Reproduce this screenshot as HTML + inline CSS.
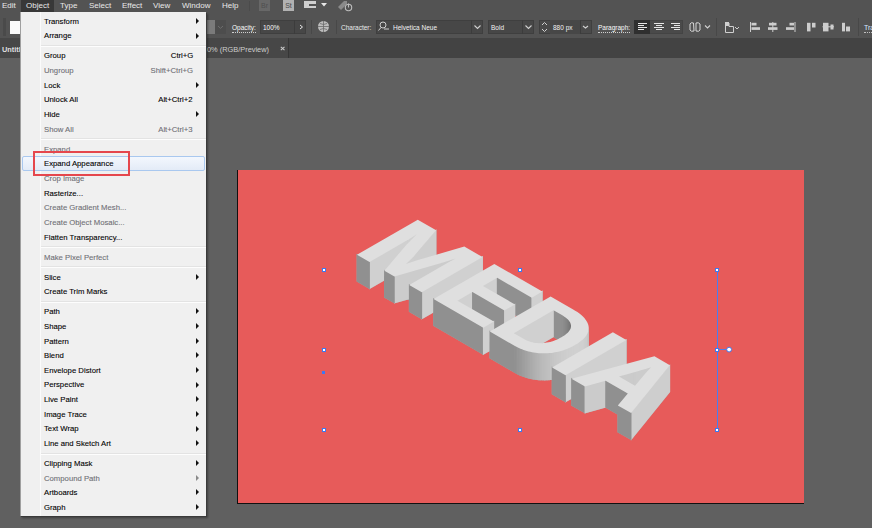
<!DOCTYPE html>
<html><head><meta charset="utf-8">
<style>
*{margin:0;padding:0;box-sizing:border-box}
html,body{width:872px;height:528px;overflow:hidden;background:#606060;font-family:"Liberation Sans",sans-serif;}
.abs{position:absolute}
#menubar{position:absolute;left:0;top:0;width:872px;height:12px;background:#535353;}
.mb{position:absolute;top:1px;font-size:8px;color:#e8e8e8;line-height:10px;white-space:nowrap}
#ctrl{position:absolute;left:0;top:12px;width:872px;height:26px;background:#535353;}
#tabs{position:absolute;left:0;top:38px;width:872px;height:20px;background:#434343;}
#canvas{position:absolute;left:0;top:58px;width:872px;height:470px;background:#606060;}
#menu{position:absolute;left:20px;top:12px;width:186px;height:504px;background:#f0f0f0;box-shadow:1px 1px 0 #3a3a3a, 2px 2px 2px rgba(0,0,0,0.35);border-left:1px solid #a0a0a0;}
.mi{position:absolute;left:23px;font-size:8px;line-height:10px;color:#000;transform:scaleX(0.965);transform-origin:0 50%;-webkit-text-stroke:0.1px currentColor;white-space:nowrap}
.mi.dis,.sc.dis{color:#6f6f75}
.sc{position:absolute;right:13px;font-size:8px;line-height:10px;color:#000;transform:scaleX(0.965);transform-origin:100% 50%;-webkit-text-stroke:0.1px currentColor;white-space:nowrap}
.ar{position:absolute;left:175px;width:0;height:0;border-top:3px solid transparent;border-bottom:3px solid transparent;border-left:3.4px solid #111}
.sep{position:absolute;left:20px;right:0;height:2px;background:#fdfdfd;border-top:1px solid #e3e3e3}
svg{position:absolute;left:0;top:0}
.cb{position:absolute;font-size:6.5px;line-height:9px;color:#fafafa;white-space:nowrap}
.tb{position:absolute;font-size:7.4px;line-height:9px;color:#cdcdcd;white-space:nowrap}
</style></head><body>
<div id="menubar">
<div class="mb" style="left:2px">Edit</div>
<div class="abs" style="left:21px;top:0;width:33px;height:12px;background:#383838"></div>
<div class="mb" style="left:26px">Object</div>
<div class="mb" style="left:60px">Type</div>
<div class="mb" style="left:89px">Select</div>
<div class="mb" style="left:122px">Effect</div>
<div class="mb" style="left:153px">View</div>
<div class="mb" style="left:182px">Window</div>
<div class="mb" style="left:222px">Help</div>
<div class="abs" style="left:249px;top:1px;width:1px;height:10px;background:#4b4b4b"></div>
<div class="abs" style="left:259px;top:0;width:11px;height:11px;background:#686868;color:#4f4f4f;font-size:7px;line-height:11px;text-align:center">Br</div>
<div class="abs" style="left:283px;top:0;width:11px;height:11px;background:#b2b2b2;color:#4a4a4a;font-size:7px;line-height:11px;text-align:center">St</div>
<div class="abs" style="left:304px;top:1px;width:12px;height:7px;background:#cfcfcf"></div>
<div class="abs" style="left:309px;top:3.5px;width:7px;height:2px;background:#535353"></div>
<svg class="abs" style="left:321px;top:3px" width="6" height="4"><path d="M0 0 H6 L3 3.5Z" fill="#e6e6e6"/></svg>
<svg class="abs" style="left:337px;top:0" width="16" height="12"><path d="M1 7 L7 1 L10 1 L10 4 L4 10 Z" fill="#8a8a8a"/><circle cx="11.5" cy="7.5" r="3.2" stroke="#bdbdbd" stroke-width="1.1" fill="#535353"/><path d="M11.5 3.5 V7.5" stroke="#bdbdbd" stroke-width="1.1"/></svg>
</div>
<div id="ctrl">
<div class="abs" style="left:3px;top:6px;width:3px;height:18px;background:#4a4a4a"></div>
<div class="abs" style="left:10px;top:9px;width:12px;height:13px;background:#fafafa"></div>
<div class="abs" style="left:205px;top:8px;width:10px;height:14px;background:#7b7b7b"></div>
<div class="abs" style="left:215px;top:8px;width:11px;height:14px;background:#4d4d4d"></div>
<svg class="abs" style="left:216px;top:11px" width="9" height="8"><path d="M2 3 L4.5 5.3 L7 3" stroke="#6e6e6e" stroke-width="1" fill="none"/></svg>
<div class="cb" style="left:232px;top:11px;border-bottom:1px dotted #cfcfcf">Opacity:</div>
<div class="abs" style="left:260px;top:8px;width:46px;height:14px;background:#474747;border:1px solid #3f3f3f"></div>
<div class="abs" style="left:294px;top:8px;width:1px;height:14px;background:#3c3c3c"></div>
<div class="cb" style="left:263px;top:11px">100%</div>
<svg class="abs" style="left:297px;top:11px" width="8" height="8"><path d="M3 2 L5.5 4 L3 6" stroke="#e8e8e8" stroke-width="1" fill="none"/></svg>
<div class="abs" style="left:311px;top:8px;width:1px;height:14px;background:#484848"></div>
<svg class="abs" style="left:317px;top:8px" width="13" height="13"><circle cx="6.5" cy="6.5" r="5.5" fill="#bdbdbd"/><path d="M1 6.5h11M6.5 1v11M3 3.5q3.5 2 7 0M3 9.5q3.5-2 7 0" stroke="#6a6a6a" stroke-width="0.8" fill="none"/></svg>
<div class="abs" style="left:336px;top:8px;width:1px;height:14px;background:#484848"></div>
<div class="cb" style="left:341px;top:11px;color:#eaeaea">Character:</div>
<div class="abs" style="left:376px;top:8px;width:107px;height:14px;background:#474747;border:1px solid #3f3f3f"></div>
<div class="abs" style="left:471px;top:8px;width:1px;height:14px;background:#3c3c3c"></div>
<svg class="abs" style="left:377px;top:9px" width="13" height="11"><circle cx="6" cy="4" r="3" stroke="#cfcfcf" stroke-width="1" fill="none"/><path d="M4 6.5 L1.5 9.5 M7 8h5" stroke="#cfcfcf" stroke-width="1"/></svg>
<div class="cb" style="left:393px;top:11px;color:#f2f2f2">Helvetica Neue</div>
<svg class="abs" style="left:473px;top:11px" width="9" height="8"><path d="M1.5 2.5 L4.5 5.5 L7.5 2.5" stroke="#d0d0d0" stroke-width="1.1" fill="none"/></svg>
<div class="abs" style="left:488px;top:8px;width:46px;height:14px;background:#474747;border:1px solid #3f3f3f"></div>
<div class="abs" style="left:522px;top:8px;width:1px;height:14px;background:#3c3c3c"></div>
<div class="cb" style="left:491px;top:11px;color:#f2f2f2">Bold</div>
<svg class="abs" style="left:524px;top:11px" width="9" height="8"><path d="M1.5 2.5 L4.5 5.5 L7.5 2.5" stroke="#d0d0d0" stroke-width="1.1" fill="none"/></svg>
<div class="abs" style="left:539px;top:8px;width:53px;height:14px;background:#4a4a4a;border:1px solid #3f3f3f"></div>
<div class="abs" style="left:550px;top:8px;width:30px;height:14px;background:#474747"></div>
<div class="abs" style="left:580px;top:8px;width:1px;height:14px;background:#3c3c3c"></div>
<svg class="abs" style="left:540px;top:8px" width="9" height="14"><path d="M2 5 L4.5 2.5 L7 5 M2 9 L4.5 11.5 L7 9" stroke="#d0d0d0" stroke-width="1" fill="none"/></svg>
<div class="cb" style="left:553px;top:11px;color:#f2f2f2">880 px</div>
<svg class="abs" style="left:581px;top:11px" width="9" height="8"><path d="M2 3 L4.5 5 L7 3" stroke="#d0d0d0" stroke-width="1.1" fill="none"/></svg>
<div class="cb" style="left:598px;top:11px;border-bottom:1px dotted #cfcfcf">Paragraph:</div>
<div class="abs" style="left:634px;top:8px;width:49px;height:14px;background:#4a4a4a;border:1px solid #444"></div>
<div class="abs" style="left:634px;top:8px;width:16px;height:14px;background:#2f2f2f"></div>
<svg class="abs" style="left:634px;top:8px" width="49" height="14" stroke="#e6e6e6" stroke-width="1">
<path d="M4 3.5h9M4 5.5h6M4 7.5h9M4 9.5h6"/>
<path d="M20 3.5h10M22 5.5h6M20 7.5h10M22 9.5h6"/>
<path d="M37 3.5h9M40 5.5h6M37 7.5h9M40 9.5h6"/>
</svg>
<svg class="abs" style="left:688px;top:9px" width="24" height="13"><path d="M2 3 Q3 1 5.5 2 L6 10 Q3 11 2 9 Z M8 2 Q10.5 1 12 3 L12 9 Q11 11 8 10 Z" stroke="#d8d8d8" stroke-width="1" fill="none"/><path d="M17 4.5 L19.5 7 L22 4.5" stroke="#d0d0d0" stroke-width="1.1" fill="none"/></svg>
<div class="abs" style="left:716px;top:6px;width:1px;height:18px;background:#484848"></div>
<svg class="abs" style="left:723px;top:9px" width="18" height="13"><path d="M2.5 2 V11.5 H10.5 V5.5 H6 V2" stroke="#cfcfcf" stroke-width="1" fill="none"/><rect x="2" y="1" width="4" height="4" fill="#cfcfcf"/><path d="M12 6 L14 8 L16 6" stroke="#cfcfcf" stroke-width="1" fill="none"/></svg>
<svg class="abs" style="left:745px;top:8px" width="112" height="14" fill="#cdcdcd">
<rect x="5" y="2" width="1" height="10"/><rect x="6.5" y="2.8" width="5" height="2.7"/><rect x="6.5" y="7.2" width="8.5" height="2.7"/>
<rect x="27.3" y="2" width="1" height="10"/><rect x="24" y="2.8" width="7.5" height="2.7"/><rect x="23" y="7.2" width="9.5" height="2.7"/>
<rect x="49.5" y="2" width="1" height="10"/><rect x="44.5" y="2.8" width="4.5" height="2.7"/><rect x="41" y="7.2" width="8" height="2.7"/>
<rect x="62" y="2.8" width="3.5" height="8.6"/><rect x="67" y="2.8" width="3.5" height="4.7"/>
<rect x="77.5" y="6.3" width="11.5" height="1"/><rect x="78" y="2.8" width="5.5" height="8.6"/><rect x="85.5" y="4.5" width="3" height="5"/>
<rect x="97" y="2.8" width="3" height="8.6"/><rect x="101" y="6.5" width="4" height="4.9"/>
</svg>
<div class="abs" style="left:858px;top:6px;width:1px;height:18px;background:#484848"></div>
<div class="cb" style="left:864px;top:11px;font-size:7px;color:#d6e6ff;border-bottom:1px dotted #c0c0c0">Transform</div>
</div>
<div id="tabs">
<div class="abs" style="left:0;top:0;width:288px;height:20px;background:#474747"></div>
<div class="abs" style="left:288px;top:0;width:1px;height:20px;background:#363636"></div>
<div class="tb" style="left:2px;top:7px;font-weight:bold;color:#dedede">Untitled-1* @ 50% (RGB/Preview)</div>
<div class="tb" style="left:207px;top:7px;background:#474747;padding-left:0">0% (RGB/Preview)</div>
<svg class="abs" style="left:280px;top:8px" width="6" height="5"><path d="M0.8 0.8 L4.5 4.2 M4.5 0.8 L0.8 4.2" stroke="#c8c8c8" stroke-width="1.1"/></svg>
</div>
<div id="canvas"></div>
<svg width="872" height="528" viewBox="0 0 872 528">
<rect x="238" y="170" width="566" height="333" fill="#e75b5a"/>
<rect x="237" y="170" width="1" height="334" fill="#111"/>
<rect x="237" y="503" width="567" height="1" fill="#111"/>
<path fill="#a8a8a8" d="M418.30,231.89 417.08,233.46 417.08,261.26 418.30,259.69ZM417.66,232.93 415.56,234.28 415.56,262.08 417.66,260.73ZM416.24,233.84 414.22,235.13 414.22,262.93 416.24,261.64ZM414.89,234.70 412.96,235.93 412.96,263.73 414.89,262.50ZM413.64,235.50 411.79,236.67 411.79,264.47 413.64,263.30ZM412.47,236.24 410.70,237.35 410.70,265.15 412.47,264.04ZM411.38,236.93 409.70,237.98 409.70,265.78 411.38,264.73ZM410.38,237.56 408.78,238.55 408.78,266.35 410.38,265.36ZM409.46,238.13 407.95,239.06 407.95,266.86 409.46,265.93ZM408.63,238.64 407.20,239.51 407.20,267.31 408.63,266.44ZM407.88,239.09 406.53,239.90 406.53,267.70 407.88,266.89ZM407.22,239.49 405.95,240.24 405.95,268.04 407.22,267.29ZM436.41,229.21 413.43,255.90 413.43,283.70 436.41,257.01ZM406.64,239.83 369.19,261.46 369.19,289.26 406.64,267.63ZM459.82,255.91 457.49,257.19 457.49,284.99 459.82,283.71ZM413.96,255.30 411.16,258.33 411.16,286.13 413.96,283.10ZM458.22,256.87 455.21,257.85 455.21,285.65 458.22,284.67ZM369.89,261.46 356.63,253.80 356.63,281.60 369.89,289.26ZM455.97,257.61 453.07,258.54 453.07,286.34 455.97,285.41ZM453.83,258.30 451.05,259.19 451.05,286.99 453.83,286.10ZM451.81,258.95 449.15,259.80 449.15,287.60 451.81,286.75ZM449.91,259.55 447.36,260.36 447.36,288.16 449.91,287.35ZM448.13,260.12 445.70,260.88 445.70,288.68 448.13,287.92ZM411.72,257.76 405.66,263.49 405.66,291.29 411.72,285.56ZM446.47,260.64 444.16,261.36 444.16,289.16 446.47,288.44ZM444.92,261.12 442.73,261.79 442.73,289.59 444.92,288.92ZM443.50,261.56 441.43,262.19 441.43,289.99 443.50,289.36ZM442.19,261.96 440.24,262.54 440.24,290.34 442.19,289.76ZM441.01,262.31 439.17,262.84 439.17,290.64 441.01,290.11ZM439.94,262.62 394.00,275.71 394.00,303.51 439.94,290.42ZM394.73,275.80 384.04,269.63 384.04,297.43 394.73,303.60ZM482.93,256.12 421.45,291.62 421.45,319.42 482.93,283.92ZM497.52,276.74 482.64,285.34 482.64,313.14 497.52,304.54ZM532.10,297.11 496.83,276.74 496.83,304.54 532.10,324.91ZM422.14,291.62 408.88,283.97 408.88,311.77 422.14,319.42ZM542.66,290.61 531.41,297.11 531.41,324.91 542.66,318.41ZM472.77,291.03 457.16,300.05 457.16,327.85 472.77,318.83ZM504.75,309.90 472.07,291.03 472.07,318.83 504.75,337.70ZM515.32,303.40 504.06,309.90 504.06,337.70 515.32,331.20ZM562.26,314.52 553.12,309.24 553.12,337.04 562.26,342.32ZM483.61,327.12 433.18,298.00 433.18,325.80 483.61,354.92ZM563.73,315.42 561.58,314.12 561.58,341.92 563.73,343.22ZM565.06,316.33 563.06,314.99 563.06,342.79 565.06,344.13ZM566.25,317.24 564.41,315.87 564.41,343.67 566.25,345.04ZM567.32,318.16 565.63,316.74 565.63,344.54 567.32,345.96ZM568.24,319.09 566.72,317.63 566.72,345.43 568.24,346.89ZM569.04,320.02 567.69,318.51 567.69,346.31 569.04,347.82ZM569.70,320.95 568.53,319.40 568.53,347.20 569.70,348.75ZM553.81,309.24 513.45,332.55 513.45,360.35 553.81,337.04ZM570.23,321.89 569.25,320.29 569.25,348.09 570.23,349.69ZM570.62,322.84 569.85,321.19 569.85,348.99 570.62,350.64ZM570.89,323.79 570.33,322.10 570.33,349.90 570.89,351.59ZM494.18,320.62 482.92,327.12 482.92,354.92 494.18,348.42ZM571.02,324.73 570.69,323.01 570.69,350.81 571.02,352.53ZM571.02,325.68 570.92,323.94 570.92,351.74 571.02,353.48ZM588.78,327.70 588.47,330.04 588.47,357.84 588.78,355.50ZM588.63,329.26 588.00,331.55 588.00,359.35 588.63,357.06ZM588.26,330.80 587.33,333.05 587.33,360.85 588.26,358.60ZM587.68,332.33 586.45,334.53 586.45,362.33 587.68,360.13ZM586.88,333.85 585.37,335.99 585.37,363.79 586.88,361.65ZM585.86,335.36 584.09,337.43 584.09,365.23 585.86,363.16ZM514.85,345.15 489.48,330.50 489.48,358.30 514.85,372.95ZM584.63,336.85 582.60,338.86 582.60,366.66 584.63,364.65ZM583.19,338.32 580.91,340.28 580.91,368.08 583.19,366.12ZM581.53,339.78 579.01,341.68 579.01,369.48 581.53,367.58ZM579.66,341.21 576.91,343.07 576.91,370.87 579.66,369.01ZM577.59,342.64 574.61,344.44 574.61,372.24 577.59,370.44ZM575.30,344.04 573.03,345.31 573.03,373.11 575.30,371.84ZM516.31,345.96 514.15,344.75 514.15,372.55 516.31,373.76ZM573.74,344.93 571.44,346.12 571.44,373.92 573.74,372.73ZM517.80,346.71 515.60,345.58 515.60,373.38 517.80,374.51ZM572.16,345.77 569.83,346.89 569.83,374.69 572.16,373.57ZM519.31,347.42 517.08,346.36 517.08,374.16 519.31,375.22ZM570.55,346.56 568.20,347.62 568.20,375.42 570.55,374.36ZM520.85,348.09 518.59,347.09 518.59,374.89 520.85,375.89ZM568.93,347.30 566.55,348.29 566.55,376.09 568.93,375.10ZM522.42,348.71 520.12,347.78 520.12,375.58 522.42,376.51ZM567.29,347.99 564.88,348.91 564.88,376.71 567.29,375.79ZM524.01,349.29 521.67,348.42 521.67,376.22 524.01,377.09ZM565.63,348.64 563.20,349.49 563.20,377.29 565.63,376.44ZM525.62,349.82 523.25,349.02 523.25,376.82 525.62,377.62ZM563.96,349.24 561.49,350.02 561.49,377.82 563.96,377.04ZM527.26,350.31 524.86,349.58 524.86,377.38 527.26,378.11ZM562.26,349.79 559.77,350.50 559.77,378.30 562.26,377.59ZM528.92,350.75 526.49,350.09 526.49,377.89 528.92,378.55ZM560.54,350.29 558.03,350.93 558.03,378.73 560.54,378.09ZM530.61,351.15 528.15,350.55 528.15,378.35 530.61,378.95ZM558.80,350.74 556.27,351.31 556.27,379.11 558.80,378.54ZM532.32,351.50 529.83,350.97 529.83,378.77 532.32,379.30ZM557.05,351.15 554.49,351.64 554.49,379.44 557.05,378.95ZM534.06,351.80 531.54,351.34 531.54,379.14 534.06,379.60ZM555.28,351.50 552.70,351.93 552.70,379.73 555.28,379.30ZM535.81,352.06 533.27,351.67 533.27,379.47 535.81,379.86ZM553.49,351.81 550.92,352.16 550.92,379.96 553.49,379.61ZM537.57,352.26 535.02,351.95 535.02,379.75 537.57,380.06ZM551.71,352.06 549.14,352.34 549.14,380.14 551.71,379.86ZM539.32,352.42 536.77,352.18 536.77,379.98 539.32,380.22ZM549.94,352.27 547.36,352.47 547.36,380.27 549.94,380.07ZM541.09,352.52 538.53,352.35 538.53,380.15 541.09,380.32ZM548.16,352.42 545.59,352.55 545.59,380.35 548.16,380.22ZM542.85,352.57 540.29,352.48 540.29,380.28 542.85,380.37ZM546.39,352.52 543.82,352.58 543.82,380.38 546.39,380.32ZM544.62,352.57 542.05,352.55 542.05,380.35 544.62,380.37ZM626.64,339.09 565.16,374.59 565.16,402.39 626.64,366.89ZM651.98,366.15 650.89,366.51 650.89,394.31 651.98,393.95ZM651.65,366.26 650.55,366.62 650.55,394.42 651.65,394.06ZM651.31,366.37 650.20,366.73 650.20,394.53 651.31,394.17ZM650.96,366.48 649.84,366.84 649.84,394.64 650.96,394.28ZM650.60,366.60 649.48,366.96 649.48,394.76 650.60,394.40ZM650.24,366.71 649.11,367.07 649.11,394.87 650.24,394.51ZM649.87,366.83 648.72,367.19 648.72,394.99 649.87,394.63ZM649.49,366.95 648.33,367.31 648.33,395.11 649.49,394.75ZM649.10,367.07 647.94,367.44 647.94,395.24 649.10,394.87ZM648.70,367.20 647.53,367.56 647.53,395.36 648.70,395.00ZM648.30,367.33 647.12,367.69 647.12,395.49 648.30,395.13ZM647.88,367.45 646.69,367.82 646.69,395.62 647.88,395.25ZM647.46,367.59 646.10,368.00 646.10,395.80 647.46,395.39ZM646.86,367.77 645.17,368.26 645.17,396.06 646.86,395.57ZM645.94,368.04 643.92,368.63 643.92,396.43 645.94,395.84ZM644.69,368.40 642.34,369.08 642.34,396.88 644.69,396.20ZM643.11,368.86 640.43,369.62 640.43,397.42 643.11,396.66ZM641.20,369.40 638.19,370.26 638.19,398.06 641.20,397.20ZM638.96,370.04 635.62,370.99 635.62,398.79 638.96,397.84ZM565.85,374.59 551.74,366.45 551.74,394.25 565.85,402.39ZM636.39,370.77 632.72,371.81 632.72,399.61 636.39,398.57ZM633.49,371.59 629.50,372.73 629.50,400.53 633.49,399.39ZM630.27,372.51 625.94,373.73 625.94,401.53 630.27,400.31ZM626.71,373.51 622.05,374.83 622.05,402.63 626.71,401.31ZM622.82,374.61 618.61,375.80 618.61,403.60 622.82,402.41ZM585.30,385.82 571.13,377.64 571.13,405.44 585.30,413.62ZM605.96,379.74 584.56,385.73 584.56,413.53 605.96,407.54ZM628.15,392.88 605.23,379.65 605.23,407.45 628.15,420.68ZM670.11,364.13 630.90,412.61 630.90,440.41 670.11,391.93ZM631.50,412.50 617.46,404.39 617.46,432.19 631.50,440.30Z"/>
<path fill="#cdcdcd" d="M418.30,231.89 417.08,233.46 417.08,261.26 418.30,259.69 Z"/>
<path fill="#d0d0d0" d="M417.66,232.93 415.56,234.28 415.56,262.08 417.66,260.73 Z"/>
<path fill="#d0d0d0" d="M416.24,233.84 414.22,235.13 414.22,262.93 416.24,261.64 Z"/>
<path fill="#d0d0d0" d="M414.89,234.70 412.96,235.93 412.96,263.73 414.89,262.50 Z"/>
<path fill="#d0d0d0" d="M413.64,235.50 411.79,236.67 411.79,264.47 413.64,263.30 Z"/>
<path fill="#d0d0d0" d="M412.47,236.24 410.70,237.35 410.70,265.15 412.47,264.04 Z"/>
<path fill="#d0d0d0" d="M411.38,236.93 409.70,237.98 409.70,265.78 411.38,264.73 Z"/>
<path fill="#d0d0d0" d="M410.38,237.56 408.78,238.55 408.78,266.35 410.38,265.36 Z"/>
<path fill="#d0d0d0" d="M409.46,238.13 407.95,239.06 407.95,266.86 409.46,265.93 Z"/>
<path fill="#d0d0d0" d="M408.63,238.64 407.20,239.51 407.20,267.31 408.63,266.44 Z"/>
<path fill="#d0d0d0" d="M407.88,239.09 406.53,239.90 406.53,267.70 407.88,266.89 Z"/>
<path fill="#d0d0d0" d="M407.22,239.49 405.95,240.24 405.95,268.04 407.22,267.29 Z"/>
<path fill="#cecece" d="M436.41,229.21 413.43,255.90 413.43,283.70 436.41,257.01 Z"/>
<path fill="#d0d0d0" d="M406.64,239.83 369.19,261.46 369.19,289.26 406.64,267.63 Z"/>
<path fill="#d0d0d0" d="M459.82,255.91 457.49,257.19 457.49,284.99 459.82,283.71 Z"/>
<path fill="#cfcfcf" d="M413.96,255.30 411.16,258.33 411.16,286.13 413.96,283.10 Z"/>
<path fill="#cdcdcd" d="M458.22,256.87 455.21,257.85 455.21,285.65 458.22,284.67 Z"/>
<path fill="#909090" d="M369.89,261.46 356.63,253.80 356.63,281.60 369.89,289.26 Z"/>
<path fill="#cdcdcd" d="M455.97,257.61 453.07,258.54 453.07,286.34 455.97,285.41 Z"/>
<path fill="#cdcdcd" d="M453.83,258.30 451.05,259.19 451.05,286.99 453.83,286.10 Z"/>
<path fill="#cdcdcd" d="M451.81,258.95 449.15,259.80 449.15,287.60 451.81,286.75 Z"/>
<path fill="#cccccc" d="M449.91,259.55 447.36,260.36 447.36,288.16 449.91,287.35 Z"/>
<path fill="#cccccc" d="M448.13,260.12 445.70,260.88 445.70,288.68 448.13,287.92 Z"/>
<path fill="#cfcfcf" d="M411.72,257.76 405.66,263.49 405.66,291.29 411.72,285.56 Z"/>
<path fill="#cccccc" d="M446.47,260.64 444.16,261.36 444.16,289.16 446.47,288.44 Z"/>
<path fill="#cccccc" d="M444.92,261.12 442.73,261.79 442.73,289.59 444.92,288.92 Z"/>
<path fill="#cccccc" d="M443.50,261.56 441.43,262.19 441.43,289.99 443.50,289.36 Z"/>
<path fill="#cccccc" d="M442.19,261.96 440.24,262.54 440.24,290.34 442.19,289.76 Z"/>
<path fill="#cccccc" d="M441.01,262.31 439.17,262.84 439.17,290.64 441.01,290.11 Z"/>
<path fill="#cccccc" d="M439.94,262.62 394.00,275.71 394.00,303.51 439.94,290.42 Z"/>
<path fill="#909090" d="M394.73,275.80 384.04,269.63 384.04,297.43 394.73,303.60 Z"/>
<path fill="#d0d0d0" d="M482.93,256.12 421.45,291.62 421.45,319.42 482.93,283.92 Z"/>
<path fill="#d0d0d0" d="M497.52,276.74 482.64,285.34 482.64,313.14 497.52,304.54 Z"/>
<path fill="#909090" d="M532.10,297.11 496.83,276.74 496.83,304.54 532.10,324.91 Z"/>
<path fill="#909090" d="M422.14,291.62 408.88,283.97 408.88,311.77 422.14,319.42 Z"/>
<path fill="#d0d0d0" d="M542.66,290.61 531.41,297.11 531.41,324.91 542.66,318.41 Z"/>
<path fill="#d0d0d0" d="M472.77,291.03 457.16,300.05 457.16,327.85 472.77,318.83 Z"/>
<path fill="#909090" d="M504.75,309.90 472.07,291.03 472.07,318.83 504.75,337.70 Z"/>
<path fill="#d0d0d0" d="M515.32,303.40 504.06,309.90 504.06,337.70 515.32,331.20 Z"/>
<path fill="#909090" d="M562.26,314.52 553.12,309.24 553.12,337.04 562.26,342.32 Z"/>
<path fill="#909090" d="M483.61,327.12 433.18,298.00 433.18,325.80 483.61,354.92 Z"/>
<path fill="#8f8f8f" d="M563.73,315.42 561.58,314.12 561.58,341.92 563.73,343.22 Z"/>
<path fill="#8c8c8c" d="M565.06,316.33 563.06,314.99 563.06,342.79 565.06,344.13 Z"/>
<path fill="#898989" d="M566.25,317.24 564.41,315.87 564.41,343.67 566.25,345.04 Z"/>
<path fill="#858585" d="M567.32,318.16 565.63,316.74 565.63,344.54 567.32,345.96 Z"/>
<path fill="#828282" d="M568.24,319.09 566.72,317.63 566.72,345.43 568.24,346.89 Z"/>
<path fill="#7e7e7e" d="M569.04,320.02 567.69,318.51 567.69,346.31 569.04,347.82 Z"/>
<path fill="#7a7a7a" d="M569.70,320.95 568.53,319.40 568.53,347.20 569.70,348.75 Z"/>
<path fill="#d0d0d0" d="M553.81,309.24 513.45,332.55 513.45,360.35 553.81,337.04 Z"/>
<path fill="#767676" d="M570.23,321.89 569.25,320.29 569.25,348.09 570.23,349.69 Z"/>
<path fill="#737373" d="M570.62,322.84 569.85,321.19 569.85,348.99 570.62,350.64 Z"/>
<path fill="#6f6f6f" d="M570.89,323.79 570.33,322.10 570.33,349.90 570.89,351.59 Z"/>
<path fill="#d0d0d0" d="M494.18,320.62 482.92,327.12 482.92,354.92 494.18,348.42 Z"/>
<path fill="#6b6b6b" d="M571.02,324.73 570.69,323.01 570.69,350.81 571.02,352.53 Z"/>
<path fill="#686868" d="M571.02,325.68 570.92,323.94 570.92,351.74 571.02,353.48 Z"/>
<path fill="#c4c4c4" d="M588.78,327.70 588.47,330.04 588.47,357.84 588.78,355.50 Z"/>
<path fill="#c7c7c7" d="M588.63,329.26 588.00,331.55 588.00,359.35 588.63,357.06 Z"/>
<path fill="#c9c9c9" d="M588.26,330.80 587.33,333.05 587.33,360.85 588.26,358.60 Z"/>
<path fill="#cbcbcb" d="M587.68,332.33 586.45,334.53 586.45,362.33 587.68,360.13 Z"/>
<path fill="#cdcdcd" d="M586.88,333.85 585.37,335.99 585.37,363.79 586.88,361.65 Z"/>
<path fill="#cecece" d="M585.86,335.36 584.09,337.43 584.09,365.23 585.86,363.16 Z"/>
<path fill="#909090" d="M514.85,345.15 489.48,330.50 489.48,358.30 514.85,372.95 Z"/>
<path fill="#cfcfcf" d="M584.63,336.85 582.60,338.86 582.60,366.66 584.63,364.65 Z"/>
<path fill="#d0d0d0" d="M583.19,338.32 580.91,340.28 580.91,368.08 583.19,366.12 Z"/>
<path fill="#d0d0d0" d="M581.53,339.78 579.01,341.68 579.01,369.48 581.53,367.58 Z"/>
<path fill="#d0d0d0" d="M579.66,341.21 576.91,343.07 576.91,370.87 579.66,369.01 Z"/>
<path fill="#d0d0d0" d="M577.59,342.64 574.61,344.44 574.61,372.24 577.59,370.44 Z"/>
<path fill="#d0d0d0" d="M575.30,344.04 573.03,345.31 573.03,373.11 575.30,371.84 Z"/>
<path fill="#919191" d="M516.31,345.96 514.15,344.75 514.15,372.55 516.31,373.76 Z"/>
<path fill="#d0d0d0" d="M573.74,344.93 571.44,346.12 571.44,373.92 573.74,372.73 Z"/>
<path fill="#939393" d="M517.80,346.71 515.60,345.58 515.60,373.38 517.80,374.51 Z"/>
<path fill="#cfcfcf" d="M572.16,345.77 569.83,346.89 569.83,374.69 572.16,373.57 Z"/>
<path fill="#969696" d="M519.31,347.42 517.08,346.36 517.08,374.16 519.31,375.22 Z"/>
<path fill="#cfcfcf" d="M570.55,346.56 568.20,347.62 568.20,375.42 570.55,374.36 Z"/>
<path fill="#989898" d="M520.85,348.09 518.59,347.09 518.59,374.89 520.85,375.89 Z"/>
<path fill="#cfcfcf" d="M568.93,347.30 566.55,348.29 566.55,376.09 568.93,375.10 Z"/>
<path fill="#9a9a9a" d="M522.42,348.71 520.12,347.78 520.12,375.58 522.42,376.51 Z"/>
<path fill="#cecece" d="M567.29,347.99 564.88,348.91 564.88,376.71 567.29,375.79 Z"/>
<path fill="#9d9d9d" d="M524.01,349.29 521.67,348.42 521.67,376.22 524.01,377.09 Z"/>
<path fill="#cdcdcd" d="M565.63,348.64 563.20,349.49 563.20,377.29 565.63,376.44 Z"/>
<path fill="#9f9f9f" d="M525.62,349.82 523.25,349.02 523.25,376.82 525.62,377.62 Z"/>
<path fill="#cccccc" d="M563.96,349.24 561.49,350.02 561.49,377.82 563.96,377.04 Z"/>
<path fill="#a2a2a2" d="M527.26,350.31 524.86,349.58 524.86,377.38 527.26,378.11 Z"/>
<path fill="#cccccc" d="M562.26,349.79 559.77,350.50 559.77,378.30 562.26,377.59 Z"/>
<path fill="#a4a4a4" d="M528.92,350.75 526.49,350.09 526.49,377.89 528.92,378.55 Z"/>
<path fill="#cacaca" d="M560.54,350.29 558.03,350.93 558.03,378.73 560.54,378.09 Z"/>
<path fill="#a7a7a7" d="M530.61,351.15 528.15,350.55 528.15,378.35 530.61,378.95 Z"/>
<path fill="#c9c9c9" d="M558.80,350.74 556.27,351.31 556.27,379.11 558.80,378.54 Z"/>
<path fill="#aaaaaa" d="M532.32,351.50 529.83,350.97 529.83,378.77 532.32,379.30 Z"/>
<path fill="#c8c8c8" d="M557.05,351.15 554.49,351.64 554.49,379.44 557.05,378.95 Z"/>
<path fill="#acacac" d="M534.06,351.80 531.54,351.34 531.54,379.14 534.06,379.60 Z"/>
<path fill="#c7c7c7" d="M555.28,351.50 552.70,351.93 552.70,379.73 555.28,379.30 Z"/>
<path fill="#afafaf" d="M535.81,352.06 533.27,351.67 533.27,379.47 535.81,379.86 Z"/>
<path fill="#c5c5c5" d="M553.49,351.81 550.92,352.16 550.92,379.96 553.49,379.61 Z"/>
<path fill="#b1b1b1" d="M537.57,352.26 535.02,351.95 535.02,379.75 537.57,380.06 Z"/>
<path fill="#c3c3c3" d="M551.71,352.06 549.14,352.34 549.14,380.14 551.71,379.86 Z"/>
<path fill="#b4b4b4" d="M539.32,352.42 536.77,352.18 536.77,379.98 539.32,380.22 Z"/>
<path fill="#c1c1c1" d="M549.94,352.27 547.36,352.47 547.36,380.27 549.94,380.07 Z"/>
<path fill="#b6b6b6" d="M541.09,352.52 538.53,352.35 538.53,380.15 541.09,380.32 Z"/>
<path fill="#bfbfbf" d="M548.16,352.42 545.59,352.55 545.59,380.35 548.16,380.22 Z"/>
<path fill="#b9b9b9" d="M542.85,352.57 540.29,352.48 540.29,380.28 542.85,380.37 Z"/>
<path fill="#bdbdbd" d="M546.39,352.52 543.82,352.58 543.82,380.38 546.39,380.32 Z"/>
<path fill="#bbbbbb" d="M544.62,352.57 542.05,352.55 542.05,380.35 544.62,380.37 Z"/>
<path fill="#d0d0d0" d="M626.64,339.09 565.16,374.59 565.16,402.39 626.64,366.89 Z"/>
<path fill="#cdcdcd" d="M651.98,366.15 650.89,366.51 650.89,394.31 651.98,393.95 Z"/>
<path fill="#cdcdcd" d="M651.65,366.26 650.55,366.62 650.55,394.42 651.65,394.06 Z"/>
<path fill="#cdcdcd" d="M651.31,366.37 650.20,366.73 650.20,394.53 651.31,394.17 Z"/>
<path fill="#cdcdcd" d="M650.96,366.48 649.84,366.84 649.84,394.64 650.96,394.28 Z"/>
<path fill="#cdcdcd" d="M650.60,366.60 649.48,366.96 649.48,394.76 650.60,394.40 Z"/>
<path fill="#cccccc" d="M650.24,366.71 649.11,367.07 649.11,394.87 650.24,394.51 Z"/>
<path fill="#cccccc" d="M649.87,366.83 648.72,367.19 648.72,394.99 649.87,394.63 Z"/>
<path fill="#cccccc" d="M649.49,366.95 648.33,367.31 648.33,395.11 649.49,394.75 Z"/>
<path fill="#cccccc" d="M649.10,367.07 647.94,367.44 647.94,395.24 649.10,394.87 Z"/>
<path fill="#cccccc" d="M648.70,367.20 647.53,367.56 647.53,395.36 648.70,395.00 Z"/>
<path fill="#cccccc" d="M648.30,367.33 647.12,367.69 647.12,395.49 648.30,395.13 Z"/>
<path fill="#cccccc" d="M647.88,367.45 646.69,367.82 646.69,395.62 647.88,395.25 Z"/>
<path fill="#cccccc" d="M647.46,367.59 646.10,368.00 646.10,395.80 647.46,395.39 Z"/>
<path fill="#cccccc" d="M646.86,367.77 645.17,368.26 645.17,396.06 646.86,395.57 Z"/>
<path fill="#cccccc" d="M645.94,368.04 643.92,368.63 643.92,396.43 645.94,395.84 Z"/>
<path fill="#cccccc" d="M644.69,368.40 642.34,369.08 642.34,396.88 644.69,396.20 Z"/>
<path fill="#cccccc" d="M643.11,368.86 640.43,369.62 640.43,397.42 643.11,396.66 Z"/>
<path fill="#cccccc" d="M641.20,369.40 638.19,370.26 638.19,398.06 641.20,397.20 Z"/>
<path fill="#cccccc" d="M638.96,370.04 635.62,370.99 635.62,398.79 638.96,397.84 Z"/>
<path fill="#909090" d="M565.85,374.59 551.74,366.45 551.74,394.25 565.85,402.39 Z"/>
<path fill="#cbcbcb" d="M636.39,370.77 632.72,371.81 632.72,399.61 636.39,398.57 Z"/>
<path fill="#cbcbcb" d="M633.49,371.59 629.50,372.73 629.50,400.53 633.49,399.39 Z"/>
<path fill="#cbcbcb" d="M630.27,372.51 625.94,373.73 625.94,401.53 630.27,400.31 Z"/>
<path fill="#cbcbcb" d="M626.71,373.51 622.05,374.83 622.05,402.63 626.71,401.31 Z"/>
<path fill="#cbcbcb" d="M622.82,374.61 618.61,375.80 618.61,403.60 622.82,402.41 Z"/>
<path fill="#909090" d="M585.30,385.82 571.13,377.64 571.13,405.44 585.30,413.62 Z"/>
<path fill="#cbcbcb" d="M605.96,379.74 584.56,385.73 584.56,413.53 605.96,407.54 Z"/>
<path fill="#909090" d="M628.15,392.88 605.23,379.65 605.23,407.45 628.15,420.68 Z"/>
<path fill="#cecece" d="M670.11,364.13 630.90,412.61 630.90,440.41 670.11,391.93 Z"/>
<path fill="#909090" d="M631.50,412.50 617.46,404.39 617.46,432.19 631.50,440.30 Z"/>
<path fill="#dfdfdf" fill-rule="nonzero" d="M409.22,284.97 445.98,263.75 446.19,263.63 446.39,263.51 446.60,263.39 446.81,263.27 447.02,263.15 447.22,263.04 447.43,262.92 447.64,262.80 447.85,262.68 448.06,262.56 448.27,262.45 448.48,262.33 448.75,262.18 449.14,261.97 449.65,261.70 450.27,261.36 451.01,260.97 451.87,260.51 452.85,259.99 453.94,259.41 455.16,258.76 456.49,258.05 457.94,257.29 459.47,256.90 457.84,257.80 455.59,258.53 453.45,259.22 451.43,259.87 449.53,260.48 447.75,261.04 446.08,261.56 444.54,262.04 443.11,262.48 441.81,262.87 440.62,263.22 439.55,263.53 394.38,276.40 384.38,270.63 406.67,244.54 418.05,233.01 417.33,233.94 415.90,234.86 414.56,235.72 413.30,236.52 412.13,237.26 411.04,237.94 410.04,238.57 409.12,239.14 408.29,239.65 407.54,240.10 406.88,240.50 406.30,240.83 369.54,262.06 356.97,254.80 417.77,219.70 436.15,230.31 413.69,256.39 411.43,258.84 405.95,264.01 417.14,260.31 464.29,246.56 482.59,257.12 421.79,292.22Z"/>
<path fill="#dfdfdf" fill-rule="nonzero" d="M433.53,299.00 494.32,263.90 542.32,291.61 531.75,297.71 497.17,277.74 482.98,285.94 514.97,304.40 504.41,310.50 472.42,292.03 457.51,300.65 493.83,321.62 483.27,327.72Z"/>
<path fill="#dfdfdf" fill-rule="nonzero" d="M574.95,345.03 573.38,345.91 571.80,346.74 570.19,347.52 568.56,348.25 566.92,348.94 565.26,349.57 563.57,350.16 561.87,350.70 560.15,351.19 558.41,351.63 556.66,352.02 554.88,352.37 553.10,352.66 551.32,352.90 549.54,353.10 547.76,353.24 545.99,353.33 544.22,353.37 542.45,353.36 540.69,353.29 538.93,353.18 537.17,353.01 535.42,352.80 533.67,352.53 531.93,352.21 530.22,351.85 528.54,351.44 526.88,350.99 525.24,350.49 523.63,349.95 522.05,349.36 520.49,348.73 518.95,348.05 517.44,347.33 515.96,346.56 514.50,345.75 489.82,331.50 550.62,296.40 572.75,309.18 575.18,310.65 577.42,312.12 579.46,313.61 581.30,315.11 582.94,316.61 584.38,318.12 585.61,319.64 586.64,321.16 587.47,322.70 588.09,324.24 588.51,325.79 588.72,327.35 588.73,328.90 588.52,330.44 588.11,331.97 587.48,333.48 586.65,334.98 585.60,336.46 584.35,337.93 582.88,339.38 581.21,340.82 579.33,342.24 577.25,343.64ZM561.45,337.24 562.98,336.32 564.37,335.40 565.62,334.48 566.75,333.55 567.74,332.63 568.59,331.70 569.32,330.77 569.92,329.83 570.38,328.90 570.71,327.96 570.92,327.03 570.99,326.08 570.94,325.14 570.76,324.21 570.46,323.28 570.02,322.35 569.46,321.43 568.77,320.52 567.96,319.61 567.01,318.70 565.93,317.80 564.73,316.90 563.39,316.01 561.92,315.12 553.47,310.24 513.80,333.15 523.99,339.03 525.33,339.76 526.70,340.42 528.09,341.00 529.51,341.52 530.96,341.96 532.44,342.34 533.94,342.64 535.48,342.88 537.04,343.05 538.64,343.14 540.27,343.17 541.93,343.13 543.61,343.02 545.27,342.84 546.93,342.59 548.58,342.28 550.21,341.89 551.84,341.44 553.47,340.91 555.08,340.32 556.69,339.66 558.28,338.92 559.87,338.12Z"/>
<path fill="#dfdfdf" fill-rule="nonzero" d="M552.09,367.45 612.88,332.35 626.30,340.09 565.50,375.19Z"/>
<path fill="#dfdfdf" fill-rule="nonzero" d="M617.81,405.39 627.80,393.48 605.58,380.65 584.95,386.42 571.48,378.64 654.45,356.35 669.86,365.24 631.15,413.10ZM651.54,366.94 651.60,367.07 651.27,367.18 650.93,367.29 650.58,367.40 650.22,367.52 649.86,367.63 649.49,367.75 649.11,367.87 648.72,367.99 648.32,368.12 647.91,368.24 647.50,368.37 647.07,368.50 646.48,368.68 645.56,368.95 644.30,369.31 642.72,369.77 640.81,370.31 638.57,370.95 636.01,371.68 633.11,372.50 629.88,373.42 626.32,374.42 622.44,375.52 618.99,376.49 635.00,385.74 645.94,372.82 649.91,368.42Z"/>

<g id="sel">
<rect x="717" y="270" width="1" height="158" fill="#4a7ef0"/>
<rect x="719" y="349" width="7.5" height="1" fill="#4f7ee6"/>
<circle cx="729.1" cy="349.6" r="2.4" fill="#fff" stroke="#3f78f0" stroke-width="1"/>
<rect x="322" y="371" width="3" height="3" fill="#3f78f0"/>
<rect x="322.5" y="268.5" width="3" height="3" fill="#fff" stroke="#3f78f0" stroke-width="1"/>
<rect x="322.5" y="348.5" width="3" height="3" fill="#fff" stroke="#3f78f0" stroke-width="1"/>
<rect x="322.5" y="428.5" width="3" height="3" fill="#fff" stroke="#3f78f0" stroke-width="1"/>
<rect x="518.5" y="268.5" width="3" height="3" fill="#fff" stroke="#3f78f0" stroke-width="1"/>
<rect x="518.5" y="428.5" width="3" height="3" fill="#fff" stroke="#3f78f0" stroke-width="1"/>
<rect x="715.5" y="268.5" width="3" height="3" fill="#fff" stroke="#3f78f0" stroke-width="1"/>
<rect x="715.5" y="348.5" width="3" height="3" fill="#fff" stroke="#3f78f0" stroke-width="1"/>
<rect x="715.5" y="428.5" width="3" height="3" fill="#fff" stroke="#3f78f0" stroke-width="1"/>
</g>
</svg>
<div id="menu">
<div class="abs" style="left:19px;top:0;width:1px;height:504px;background:#fbfbfb"></div>
<div class="mi" style="top:4.75px">Transform</div>
<div class="ar" style="top:5.85px;"></div>
<div class="mi" style="top:19.40px">Arrange</div>
<div class="ar" style="top:20.50px;"></div>
<div class="sep" style="top:32.90px"></div>
<div class="mi" style="top:39.40px">Group</div>
<div class="sc" style="top:39.40px">Ctrl+G</div>
<div class="mi dis" style="top:54.05px">Ungroup</div>
<div class="sc dis" style="top:54.05px">Shift+Ctrl+G</div>
<div class="mi" style="top:68.70px">Lock</div>
<div class="ar" style="top:69.80px;"></div>
<div class="mi" style="top:83.35px">Unlock All</div>
<div class="sc" style="top:83.35px">Alt+Ctrl+2</div>
<div class="mi" style="top:98.00px">Hide</div>
<div class="ar" style="top:99.10px;"></div>
<div class="mi dis" style="top:112.65px">Show All</div>
<div class="sc dis" style="top:112.65px">Alt+Ctrl+3</div>
<div class="sep" style="top:126.15px"></div>
<div class="mi dis" style="top:132.65px">Expand...</div>
<div class="abs" style="left:1.3px;top:144px;width:182.3px;height:14.5px;background:linear-gradient(#f3f7fd,#e3ebf7);border:1px solid #a9c8ef;border-radius:2px"></div>
<div class="mi" style="top:147.30px">Expand Appearance</div>
<div class="mi dis" style="top:161.95px">Crop Image</div>
<div class="mi" style="top:176.60px">Rasterize...</div>
<div class="mi dis" style="top:191.25px">Create Gradient Mesh...</div>
<div class="mi dis" style="top:205.90px">Create Object Mosaic...</div>
<div class="mi" style="top:220.55px">Flatten Transparency...</div>
<div class="sep" style="top:234.05px"></div>
<div class="mi dis" style="top:240.55px">Make Pixel Perfect</div>
<div class="sep" style="top:254.05px"></div>
<div class="mi" style="top:260.55px">Slice</div>
<div class="ar" style="top:261.65px;"></div>
<div class="mi" style="top:275.20px">Create Trim Marks</div>
<div class="sep" style="top:288.70px"></div>
<div class="mi" style="top:295.20px">Path</div>
<div class="ar" style="top:296.30px;"></div>
<div class="mi" style="top:309.85px">Shape</div>
<div class="ar" style="top:310.95px;"></div>
<div class="mi" style="top:324.50px">Pattern</div>
<div class="ar" style="top:325.60px;"></div>
<div class="mi" style="top:339.15px">Blend</div>
<div class="ar" style="top:340.25px;"></div>
<div class="mi" style="top:353.80px">Envelope Distort</div>
<div class="ar" style="top:354.90px;"></div>
<div class="mi" style="top:368.45px">Perspective</div>
<div class="ar" style="top:369.55px;"></div>
<div class="mi" style="top:383.10px">Live Paint</div>
<div class="ar" style="top:384.20px;"></div>
<div class="mi" style="top:397.75px">Image Trace</div>
<div class="ar" style="top:398.85px;"></div>
<div class="mi" style="top:412.40px">Text Wrap</div>
<div class="ar" style="top:413.50px;"></div>
<div class="mi" style="top:427.05px">Line and Sketch Art</div>
<div class="ar" style="top:428.15px;"></div>
<div class="sep" style="top:440.55px"></div>
<div class="mi" style="top:447.05px">Clipping Mask</div>
<div class="ar" style="top:448.15px;"></div>
<div class="mi dis" style="top:461.70px">Compound Path</div>
<div class="ar" style="top:462.80px;border-left-color:#8a8a8a"></div>
<div class="mi" style="top:476.35px">Artboards</div>
<div class="ar" style="top:477.45px;"></div>
<div class="mi" style="top:491.00px">Graph</div>
<div class="ar" style="top:492.10px;"></div>
<div class="abs" style="left:11.6px;top:139px;width:97.5px;height:25.2px;border:2.3px solid #e5474d"></div>
</div>
</body></html>
